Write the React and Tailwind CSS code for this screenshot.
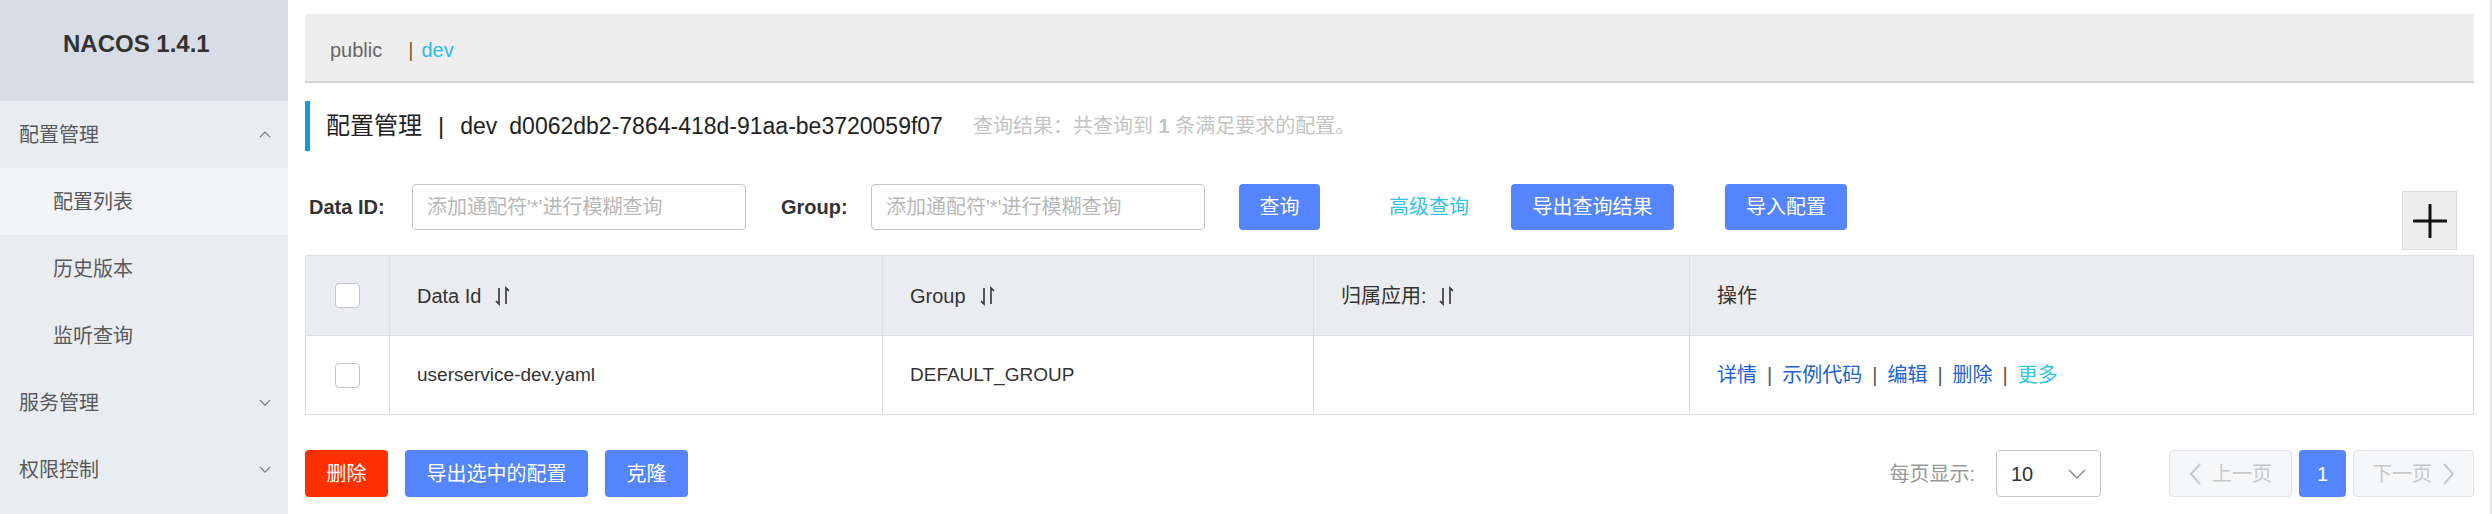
import React from "react";

const Chevron = ({ dir = "down", color = "#777", size = 12 }) => (
  <svg width={size} height={size * 0.6} viewBox="0 0 12 7" fill="none" stroke={color} strokeWidth="1.2">
    {dir === "down" ? <path d="M1 1l5 5 5-5" /> : <path d="M1 6l5-5 5 5" />}
  </svg>
);

const SortIcon = () => (
  <svg width="15" height="20" viewBox="0 0 15 20" fill="none" stroke="#333" strokeWidth="1.6">
    <path d="M4 2v16l-3-3" />
    <path d="M11 18V2l3 3" />
  </svg>
);

const Checkbox = () => (
  <div className="w-[25px] h-[25px] rounded-[4px] border border-[#c4c6cf] bg-white" />
);

const menu = [
  { label: "配置管理", level: 0, icon: "up" },
  { label: "配置列表", level: 1, active: true },
  { label: "历史版本", level: 1 },
  { label: "监听查询", level: 1 },
  { label: "服务管理", level: 0, icon: "down" },
  { label: "权限控制", level: 0, icon: "down" },
];

const Sidebar = () => (
  <aside className="w-[288px] shrink-0 bg-[#e9ecf1] flex flex-col">
    <div className="h-[101px] bg-[#d8dde5] flex items-center pl-[63px] pb-[14px] text-[24px] font-bold text-[#333]">
      NACOS 1.4.1
    </div>
    {menu.map((m) => (
      <div
        key={m.label}
        className={`h-[67px] flex items-center justify-between pr-[17px] text-[20px] text-[#5a5a5a] ${
          m.level ? "pl-[53px]" : "pl-[19px]"
        } ${m.active ? "bg-[#f1f3f6]" : ""}`}
      >
        <span>{m.label}</span>
        {m.icon && <Chevron dir={m.icon} color="#777" size={12} />}
      </div>
    ))}
  </aside>
);

const Btn = ({ children, className = "" }) => (
  <button
    className={`h-[46px] rounded-[4px] bg-[#5584ff] text-white text-[20px] flex items-center justify-center ${className}`}
  >
    {children}
  </button>
);

const FilterRow = () => (
  <div className="mt-[33px] h-[71px] flex items-start">
    <label className="w-[107px] pl-[4px] h-[46px] flex items-center text-[20px] font-bold text-[#333]">
      Data ID:
    </label>
    <input
      placeholder="添加通配符'*'进行模糊查询"
      className="w-[334px] h-[46px] rounded-[4px] border border-[#c4c6cf] px-[14px] text-[20px] outline-none placeholder:text-[#b8b8b8]"
    />
    <label className="w-[125px] pl-[35px] h-[46px] flex items-center text-[20px] font-bold text-[#333]">
      Group:
    </label>
    <input
      placeholder="添加通配符'*'进行模糊查询"
      className="w-[334px] h-[46px] rounded-[4px] border border-[#c4c6cf] px-[14px] text-[20px] outline-none placeholder:text-[#b8b8b8]"
    />
    <Btn className="ml-[34px] w-[81px]">查询</Btn>
    <span className="ml-[69px] h-[46px] flex items-center text-[20px] text-[#33c3e3]">高级查询</span>
    <Btn className="ml-[42px] w-[163px]">导出查询结果</Btn>
    <Btn className="ml-[51px] w-[122px]">导入配置</Btn>
    <button className="ml-auto mr-[17px] mt-[7px] w-[55px] h-[59px] bg-[#eeeeee] border border-[#dcdcdc] flex items-center justify-center">
      <svg width="34" height="34" viewBox="0 0 34 34" stroke="#111" strokeWidth="3" strokeLinecap="round">
        <path d="M17 1v32M1 17h32" />
      </svg>
    </button>
  </div>
);

const ConfigTable = () => (
  <table className="w-full table-fixed border-collapse border border-[#dcdee3] text-[20px] text-[#333]">
    <colgroup>
      <col className="w-[84px]" />
      <col className="w-[493px]" />
      <col className="w-[431px]" />
      <col className="w-[376px]" />
      <col />
    </colgroup>
    <thead>
      <tr className="h-[80px] bg-[#ebecf0]">
        <th className="border border-[#dcdee3] pl-[29px] font-normal text-left">
          <Checkbox />
        </th>
        <th className="border border-[#dcdee3] pl-[27px] font-normal text-left">
          <span className="flex items-center gap-[14px]">
            <span>Data Id</span>
            <SortIcon />
          </span>
        </th>
        <th className="border border-[#dcdee3] pl-[27px] font-normal text-left">
          <span className="flex items-center gap-[14px]">
            <span>Group</span>
            <SortIcon />
          </span>
        </th>
        <th className="border border-[#dcdee3] pl-[27px] font-normal text-left">
          <span className="flex items-center gap-[12px]">
            <span>归属应用:</span>
            <SortIcon />
          </span>
        </th>
        <th className="border border-[#dcdee3] pl-[27px] font-normal text-left">操作</th>
      </tr>
    </thead>
    <tbody>
      <tr className="h-[79px] bg-white">
        <td className="border border-[#dcdee3] pl-[29px]">
          <Checkbox />
        </td>
        <td className="border border-[#dcdee3] pl-[27px] text-[19px]">userservice-dev.yaml</td>
        <td className="border border-[#dcdee3] pl-[27px] text-[19px]">DEFAULT_GROUP</td>
        <td className="border border-[#dcdee3] pl-[27px]"></td>
        <td className="border border-[#dcdee3] pl-[27px]">
          <span className="flex items-center text-[#1a62d6]">
            <span>详情</span>
            <span className="mx-[10px] text-[#555]">|</span>
            <span>示例代码</span>
            <span className="mx-[10px] text-[#555]">|</span>
            <span>编辑</span>
            <span className="mx-[10px] text-[#555]">|</span>
            <span>删除</span>
            <span className="mx-[10px] text-[#555]">|</span>
            <span className="text-[#33c3e3]">更多</span>
          </span>
        </td>
      </tr>
    </tbody>
  </table>
);

const Footer = () => (
  <div className="mt-[35px] h-[47px] flex items-center">
    <button className="w-[83px] h-[47px] rounded-[4px] bg-[#ff3000] text-white text-[20px]">删除</button>
    <Btn className="ml-[17px] w-[183px] h-[47px]">导出选中的配置</Btn>
    <Btn className="ml-[17px] w-[83px] h-[47px]">克隆</Btn>

    <span className="ml-auto text-[20px] text-[#999]">每页显示:</span>
    <div className="ml-[21px] w-[105px] h-[47px] rounded-[4px] border border-[#c4c6cf] flex items-center justify-between pl-[14px] pr-[14px] text-[20px] text-[#333]">
      <span>10</span>
      <svg width="18" height="10" viewBox="0 0 18 10" fill="none" stroke="#888" strokeWidth="1.4">
        <path d="M1 1l8 8 8-8" />
      </svg>
    </div>
    <button className="ml-[68px] w-[123px] h-[47px] rounded-[4px] bg-[#f6f7f9] border border-[#e3e4e8] flex items-center justify-center gap-[10px] text-[20px] text-[#c8c8c8]">
      <svg width="13" height="22" viewBox="0 0 13 22" fill="none" stroke="#c8c8c8" strokeWidth="2">
        <path d="M11 1L2 11l9 10" />
      </svg>
      <span>上一页</span>
    </button>
    <button className="ml-[7px] w-[47px] h-[47px] rounded-[4px] bg-[#5584ff] text-white text-[20px]">1</button>
    <button className="ml-[7px] w-[121px] h-[47px] rounded-[4px] bg-[#f6f7f9] border border-[#e3e4e8] flex items-center justify-center gap-[10px] text-[20px] text-[#c8c8c8]">
      <span>下一页</span>
      <svg width="13" height="22" viewBox="0 0 13 22" fill="none" stroke="#c8c8c8" strokeWidth="2">
        <path d="M2 1l9 10-9 10" />
      </svg>
    </button>
  </div>
);

export default function App() {
  return (
    <div className="flex w-[2492px] h-[514px] bg-white text-[#333] font-['Liberation_Sans','Noto_Sans_CJK_SC',sans-serif]">
      <Sidebar />
      <main className="flex-1 pl-[17px] pr-[16px] pt-[14px] border-r-2 border-[#e3e3e3] flex flex-col">
        <div className="h-[69px] bg-[#eeeeee] border-b-2 border-[#d6d6d6] flex items-center pl-[25px] pt-[4px] text-[20px]">
          <span className="text-[#666]">public</span>
          <span className="ml-[26px] text-[#7a5c30]">|</span>
          <span className="ml-[8px] text-[#2fbde0]">dev</span>
        </div>

        <div className="mt-[18px] h-[50px] border-l-[5px] border-[#159bd2] pl-[16px] flex items-center text-[24px] text-[#222]">
          <span>配置管理</span>
          <span className="ml-[16px]">|</span>
          <span className="ml-[16px] text-[23px]">dev</span>
          <span className="ml-[12px] text-[23px]">d0062db2-7864-418d-91aa-be3720059f07</span>
          <span className="ml-[30px] text-[20px] text-[#c4c4c4]">
            查询结果：共查询到 <b>1</b> 条满足要求的配置。
          </span>
        </div>

        <FilterRow />
        <ConfigTable />
        <Footer />
      </main>
    </div>
  );
}
